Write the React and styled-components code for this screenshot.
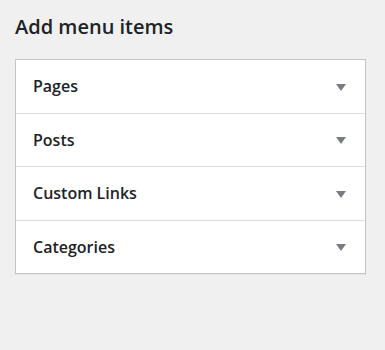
import React from "react";
import styled, { createGlobalStyle } from "styled-components";

const GlobalStyle = createGlobalStyle`
  html, body {
    margin: 0;
    padding: 0;
    background: #f0f0f1;
  }
  body {
    font-family: "Open Sans", "Noto Sans", sans-serif;
    color: #1d2327;
  }
`;

const Page = styled.div`
  width: 385px;
  height: 350px;
  box-sizing: border-box;
  padding: 13px 20px 0 15px;
`;

const Title = styled.h2`
  margin: 0 0 18px;
  font-size: 20px;
  line-height: 28px;
  font-weight: 600;
  color: #1d2327;
`;

const Panel = styled.div`
  width: 351px;
  box-sizing: border-box;
  background: #fff;
  border: 1px solid #c3c4c7;
  box-shadow: 0 1px 1px rgba(0, 0, 0, 0.04);
`;

const Row = styled.div`
  display: flex;
  align-items: center;
  justify-content: space-between;
  height: 52.5px;
  padding: 0 19px 0 17px;
  border-top: ${(p) => (p.$first ? "none" : "1px solid #dcdcde")};
  font-size: 16px;
  font-weight: 600;
  color: #1d2327;
`;

const Arrow = styled.span`
  width: 0;
  height: 0;
  border-left: 5px solid transparent;
  border-right: 5px solid transparent;
  border-top: 7px solid #787c82;
  margin-top: 2px;
`;

const items = ["Pages", "Posts", "Custom Links", "Categories"];

export default function App() {
  return (
    <>
      <GlobalStyle />
      <Page>
        <Title>Add menu items</Title>
        <Panel>
          {items.map((label, i) => (
            <Row key={label} $first={i === 0}>
              {label}
              <Arrow />
            </Row>
          ))}
        </Panel>
      </Page>
    </>
  );
}
